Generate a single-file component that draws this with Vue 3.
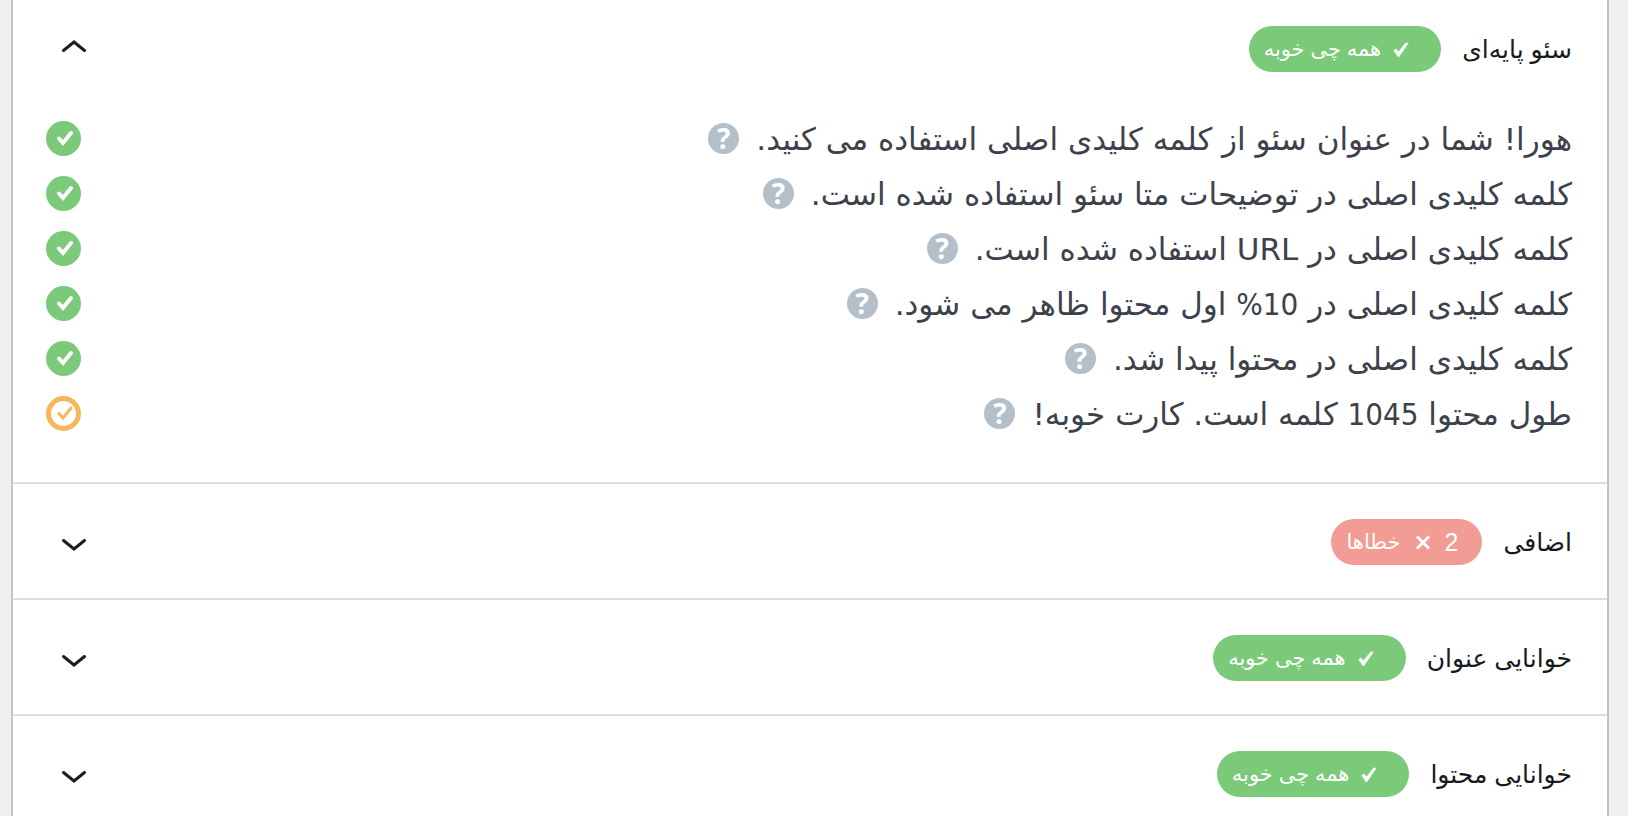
<template>
  <main class="page" dir="rtl" lang="fa">
    <div class="panel">
      <section v-for="group in groups" :key="group.id" class="group">
        <h2 class="group-heading">
          <button
            type="button"
            class="group-toggle"
            :aria-expanded="group.open"
            @click="group.open = !group.open"
          >
            <span class="group-title">{{ group.title }}</span>
            <span class="badge" :class="`badge-${group.status}`">
              <span v-if="group.errors" class="badge-count">{{ group.errors }}</span>
              <svg v-if="group.errors" class="badge-icon" viewBox="0 0 16 16" aria-hidden="true">
                <path d="M2 2.5 14 14.5M14 2.5 2 14.5" />
              </svg>
              <svg v-else class="badge-icon" viewBox="0 0 16 16" aria-hidden="true">
                <path class="tick" d="M0.5 9.6 2.8 7.6 5.4 10.6 12.6 1.8H15.8L6 16H4.8Z" />
              </svg>
              <span class="badge-text">{{ group.label }}</span>
            </span>
            <svg class="chevron" viewBox="0 0 24 18" aria-hidden="true">
              <path :d="group.open ? 'M1.5 10.5 12 2 22.5 10.5' : 'M1.5 7.5 12 16 22.5 7.5'" />
            </svg>
          </button>
        </h2>

        <ul v-if="group.tests.length" v-show="group.open" class="tests">
          <li v-for="test in group.tests" :key="test.text" class="test">
            <span class="test-text">
              <span
                v-for="(part, index) in splitNumbers(test.text)"
                :key="index"
                :class="{ number: index % 2 === 1 }"
              >{{ part }}</span>
            </span>
            <a href="#" class="help" aria-label="راهنما">?</a>
            <svg class="status" :class="`status-${test.status}`" viewBox="0 0 35 35" aria-hidden="true">
              <circle cx="17.5" cy="17.5" :r="test.status === 'ok' ? 17.5 : 15" />
              <path d="M13 17.5 17 22 25 12" />
            </svg>
          </li>
        </ul>
      </section>
    </div>
  </main>
</template>

<script setup>
import { ref } from 'vue'

const groups = ref([
  {
    id: 'basic',
    title: 'سئو پایه‌ای',
    status: 'good',
    label: 'همه چی خوبه',
    errors: 0,
    open: true,
    tests: [
      { status: 'ok', text: 'هورا! شما در عنوان سئو از کلمه کلیدی اصلی استفاده می کنید.' },
      { status: 'ok', text: 'کلمه کلیدی اصلی در توضیحات متا سئو استفاده شده است.' },
      { status: 'ok', text: 'کلمه کلیدی اصلی در URL استفاده شده است.' },
      { status: 'ok', text: 'کلمه کلیدی اصلی در 10% اول محتوا ظاهر می شود.' },
      { status: 'ok', text: 'کلمه کلیدی اصلی در محتوا پیدا شد.' },
      { status: 'warning', text: 'طول محتوا 1045 کلمه است. کارت خوبه!' },
    ],
  },
  {
    id: 'additional',
    title: 'اضافی',
    status: 'bad',
    label: 'خطاها',
    errors: 2,
    open: false,
    tests: [],
  },
  {
    id: 'title-readability',
    title: 'خوانایی عنوان',
    status: 'good',
    label: 'همه چی خوبه',
    errors: 0,
    open: false,
    tests: [],
  },
  {
    id: 'content-readability',
    title: 'خوانایی محتوا',
    status: 'good',
    label: 'همه چی خوبه',
    errors: 0,
    open: false,
    tests: [],
  },
])

// odd parts are the numbers
const splitNumbers = (text) => text.split(/([0-9%]+)/)
</script>

<style>
body {
  background-color: #f0f0f1;
  overflow: hidden;
}
</style>

<style scoped>
.page {
  padding: 0 19px 0 11px;
  font-family: 'Liberation Sans', 'DejaVu Sans', sans-serif;
}

.panel {
  background-color: #ffffff;
  border: solid #c3c4c7;
  border-width: 0 2px;
}

.group + .group {
  border-top: 2px solid #dedede;
}

.group-heading {
  margin: 0;
  font-size: 25px;
  font-weight: normal;
}

.group-toggle {
  width: 100%;
  display: flex;
  align-items: center;
  gap: 21px;
  padding: 35px 35px 33px 49px;
  border: none;
  background: none;
  font: inherit;
  color: #18191c;
  cursor: pointer;
}

.group:first-child .group-toggle {
  padding-top: 26px;
}

.group-title {
  line-height: 32px;
}

.badge {
  height: 46px;
  box-sizing: border-box;
  display: flex;
  align-items: center;
  gap: 12px;
  padding: 0 32px 0 15px;
  border-radius: 23px;
  font-size: 21px;
  line-height: 32px;
  color: #ffffff;
}

.badge-good {
  background-color: #7aca7a;
}

.badge-bad {
  gap: 14px;
  padding-right: 24px;
  background-color: #f39c96;
}

.badge-count {
  font-size: 25px;
}

.badge-icon {
  width: 16px;
  height: 16px;
  fill: none;
  stroke: #ffffff;
  stroke-width: 3;
}

.badge-icon .tick {
  fill: #ffffff;
  stroke: none;
}

.chevron {
  width: 24px;
  height: 18px;
  margin-right: auto;
  fill: none;
  stroke: #1d1d20;
  stroke-width: 3;
  stroke-linecap: round;
}

.tests {
  margin: 0;
  padding: 6px 35px 41px 33px;
  list-style: none;
}

.test {
  display: flex;
  align-items: center;
  height: 55px;
  font-family: 'DejaVu Sans', sans-serif;
  font-size: 31px;
  color: #3c414b;
}

.number {
  font-family: 'DejaVu Sans Condensed', 'DejaVu Sans', sans-serif;
}

.help {
  width: 31px;
  height: 31px;
  margin-right: 17px;
  border-radius: 50%;
  background-color: #b4bfca;
  font-family: 'Open Sans', sans-serif;
  font-size: 28px;
  font-weight: 700;
  line-height: 31px;
  text-align: center;
  text-decoration: none;
  color: #ffffff;
}

.status {
  width: 35px;
  height: 35px;
  margin-right: auto;
}

.status path {
  fill: none;
  stroke: #ffffff;
  stroke-width: 4;
  stroke-linecap: round;
}

.status-ok circle {
  fill: #7aca7a;
}

.status-warning circle {
  fill: none;
  stroke: #f5b759;
  stroke-width: 5;
}

.status-warning path {
  stroke: #f5b759;
  stroke-width: 3;
}
</style>
